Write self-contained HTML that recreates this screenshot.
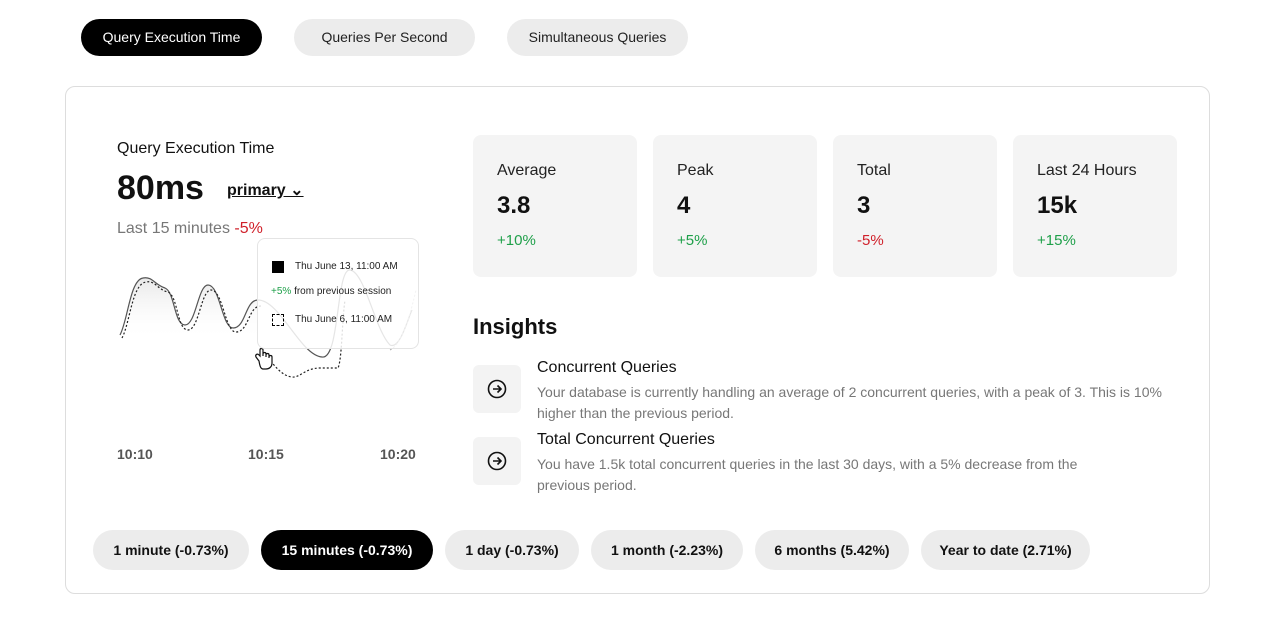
<!DOCTYPE html><html><head><style>
body{margin:0;width:1272px;height:622px;background:#fff;font-family:"Liberation Sans",sans-serif;color:#111;position:relative;overflow:hidden}
.a{position:absolute}
.tab{position:absolute;top:19px;height:37px;border-radius:19px;background:#ececec;font-size:14px;line-height:37px;text-align:center;color:#222}
.card{position:absolute;left:65px;top:86px;width:1143px;height:506px;border:1px solid #ddd;border-radius:10px}
.stat{position:absolute;top:135px;width:164px;height:142px;background:#f4f4f4;border-radius:8px}
.stat .l{position:absolute;left:24px;top:27px;font-size:16px;color:#222}
.stat .v{position:absolute;left:24px;top:57px;font-size:24px;font-weight:bold}
.stat .p{position:absolute;left:24px;top:97px;font-size:15px}
.g{color:#1fa04a}.r{color:#d0202a}
.pill{position:absolute;top:530px;height:40px;border-radius:20px;background:#ececec;font-size:14px;font-weight:bold;line-height:40px;text-align:center}
.ib{position:absolute;left:473px;width:48px;height:48px;background:#f3f3f3;border-radius:6px}
.ib svg{position:absolute;left:14px;top:14px}
</style></head><body>
<div class="tab" style="left:81px;width:181px;background:#000;color:#fff">Query Execution Time</div>
<div class="tab" style="left:294px;width:181px">Queries Per Second</div>
<div class="tab" style="left:507px;width:181px">Simultaneous Queries</div>
<div class="card"></div>
<div class="a" style="left:117px;top:140px;font-size:16px">Query Execution Time</div>
<div class="a" style="left:117px;top:169px;font-size:34px;font-weight:bold">80ms</div>
<div class="a" style="left:227px;top:180px;font-size:16px;font-weight:bold;text-decoration:underline">primary ⌄</div>
<div class="a" style="left:117px;top:220px;font-size:16px;color:#777">Last 15 minutes <span class="r">-5%</span></div>
<svg class="a" style="left:0;top:0" width="440" height="400">
<defs><linearGradient id="f" x1="0" y1="0" x2="0" y2="1"><stop offset="0" stop-color="#e8e8e8"/><stop offset="1" stop-color="#fff" stop-opacity="0"/></linearGradient></defs>
<path d="M120 335 C128 320,130 280,143 278 C152 276,155 285,165 288 C175 292,174 325,185 325 C196 325,198 285,208 285 C220 285,222 328,233 328 C246 328,245 300,258 300 L258 340 L120 340Z" fill="url(#f)"/>
<path d="M120 335 C128 320,130 280,143 278 C152 276,155 285,165 288 C175 292,174 325,185 325 C196 325,198 285,208 285 C220 285,222 328,233 328 C246 328,245 300,258 300 C280 300,300 355,322 357 C340 360,336 268,350 270 C365 272,375 330,390 345 C400 350,408 318,412 310" fill="none" stroke="#555" stroke-width="1.2"/>
<path d="M122 338 C130 323,132 284,146 282 C155 280,158 290,168 292 C178 296,177 330,188 330 C199 330,201 290,211 290 C223 290,225 332,236 332 C249 332,248 306,261 306 M268 358 C275 366,282 376,292 377 C300 378,305 368,320 368 L338 368 C342 360,342 320,345 300" fill="none" stroke="#222" stroke-width="1.2" stroke-dasharray="2 2"/>
<path d="M390 350 C400 345,408 325,416 290" fill="none" stroke="#aaa" stroke-width="1" stroke-dasharray="2 2"/>
<path d="M259 361 L256 357 C255 355,257 353,259 355 L260 356 L260 350 C260 348,263 348,263 350 L263 356 L263 354 C263 352,266 352,266 354 L266 357 L266 355 C266 353,269 353,269 355 L269 358 L269 357 C269 355,272 355,272 357 L272 363 C272 367,269 369,266 369 L263 369 C261 369,260 367,259 361Z" fill="#fff" stroke="#111" stroke-width="1.2"/>
</svg>
<div class="a" style="left:257px;top:238px;width:160px;height:109px;border:1px solid #e4e4e4;border-radius:8px;background:rgba(255,255,255,0.85);font-size:10px;color:#222">
<div class="a" style="left:14px;top:22px;width:12px;height:12px;background:#000"></div>
<div class="a" style="left:37px;top:22px">Thu June 13, 11:00 AM</div>
<div class="a" style="left:13px;top:47px"><span class="g">+5%</span> from previous session</div>
<div class="a" style="left:14px;top:75px;width:10px;height:10px;border:1px dashed #000"></div>
<div class="a" style="left:37px;top:75px">Thu June 6, 11:00 AM</div>
</div>
<div class="a" style="left:117px;top:446px;font-size:14px;font-weight:bold;color:#555">10:10</div>
<div class="a" style="left:248px;top:446px;font-size:14px;font-weight:bold;color:#555">10:15</div>
<div class="a" style="left:380px;top:446px;font-size:14px;font-weight:bold;color:#555">10:20</div>
<div class="stat" style="left:473px"><div class="l">Average</div><div class="v">3.8</div><div class="p g">+10%</div></div>
<div class="stat" style="left:653px"><div class="l">Peak</div><div class="v">4</div><div class="p g">+5%</div></div>
<div class="stat" style="left:833px"><div class="l">Total</div><div class="v">3</div><div class="p r">-5%</div></div>
<div class="stat" style="left:1013px"><div class="l">Last 24 Hours</div><div class="v">15k</div><div class="p g">+15%</div></div>
<div class="a" style="left:473px;top:314px;font-size:22px;font-weight:bold">Insights</div>
<div class="ib" style="top:365px"><svg width="20" height="20" viewBox="0 0 20 20"><circle cx="10" cy="10" r="8.5" fill="none" stroke="#111" stroke-width="1.6"/><path d="M6 10h8M10.5 6.5L14 10l-3.5 3.5" fill="none" stroke="#111" stroke-width="1.6"/></svg></div>
<div class="ib" style="top:437px"><svg width="20" height="20" viewBox="0 0 20 20"><circle cx="10" cy="10" r="8.5" fill="none" stroke="#111" stroke-width="1.6"/><path d="M6 10h8M10.5 6.5L14 10l-3.5 3.5" fill="none" stroke="#111" stroke-width="1.6"/></svg></div>
<div class="a" style="left:537px;top:359px;font-size:16px">Concurrent Queries</div>
<div class="a" style="left:537px;top:382px;width:650px;font-size:14px;line-height:21px;color:#777">Your database is currently handling an average of 2 concurrent queries, with a peak of 3. This is 10% higher than the previous period.</div>
<div class="a" style="left:537px;top:431px;font-size:16px">Total Concurrent Queries</div>
<div class="a" style="left:537px;top:454px;width:560px;font-size:14px;line-height:21px;color:#777">You have 1.5k total concurrent queries in the last 30 days, with a 5% decrease from the previous period.</div>
<div class="pill" style="left:93px;width:156px">1 minute (-0.73%)</div>
<div class="pill" style="left:261px;width:172px;background:#000;color:#fff">15 minutes (-0.73%)</div>
<div class="pill" style="left:445px;width:134px">1 day (-0.73%)</div>
<div class="pill" style="left:591px;width:152px">1 month (-2.23%)</div>
<div class="pill" style="left:755px;width:154px">6 months (5.42%)</div>
<div class="pill" style="left:921px;width:169px">Year to date (2.71%)</div>
</body></html>
